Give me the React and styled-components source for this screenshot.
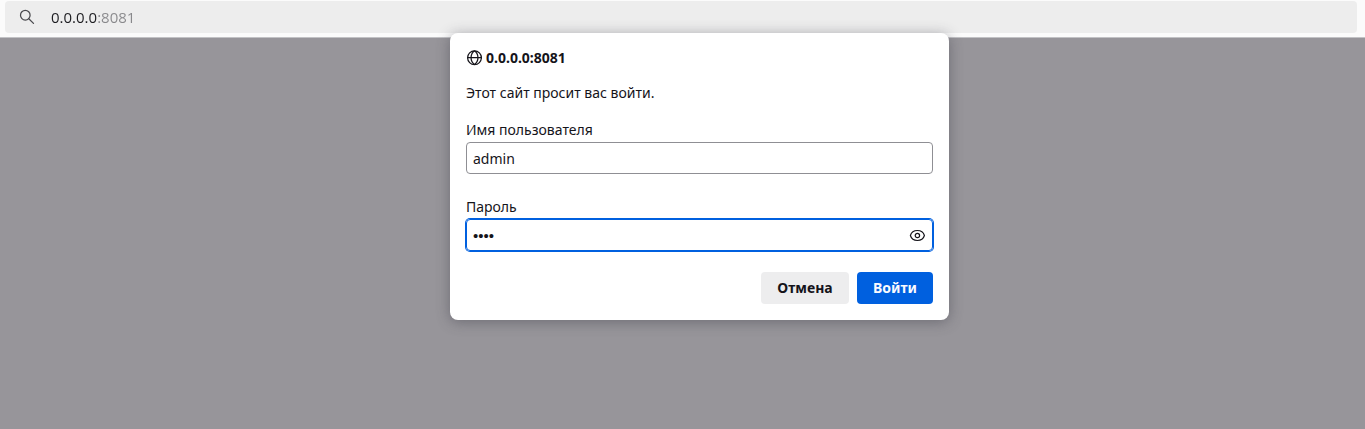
import React, { useState } from "react";
import styled, { createGlobalStyle } from "styled-components";

const GlobalStyle = createGlobalStyle`
  *, *::before, *::after { box-sizing: border-box; }
  body {
    margin: 0;
    color: #15141a;
    font: 14px/20px "Noto Sans", "Open Sans", sans-serif;
  }
  button, input { font: inherit; color: inherit; }
`;

const Browser = styled.div`
  display: flex;
  flex-direction: column;
  min-height: 100vh;
`;

const Toolbar = styled.header`
  padding: 1px 8px 4px 5px;
  background: #fbfbfb;
  border-bottom: 1px solid #c2c2c5;
`;

const AddressBar = styled.label`
  display: flex;
  align-items: center;
  gap: 16px;
  height: 32px;
  padding: 0 14px;
  border-radius: 4px;
  background: #ededed;
  color: #4a4a4e;
`;

const AddressInput = styled.input`
  flex: 1;
  min-width: 0;
  padding: 0;
  border: 0;
  outline: 0;
  color: transparent;
  background: linear-gradient(to right, #1c1c20 46px, #88888b 46px);
  background-clip: text;
  -webkit-background-clip: text;
  font-family: "Open Sans", sans-serif;
  font-size: 15px;
`;

const Content = styled.main`
  flex: 1;
  display: flex;
  justify-content: center;
  align-items: flex-start;
  padding-left: 34px;
  background: #97959a;
`;

const Dialog = styled.form`
  width: 499px;
  max-width: 100%;
  margin-top: -5px;
  padding: 15px 16px 16px;
  border-radius: 8px;
  background: #fff;
  box-shadow: 0 2px 14px rgba(58, 57, 68, 0.45);
`;

const Origin = styled.h1`
  display: flex;
  align-items: center;
  gap: 4px;
  margin: 0 0 15px;
  font-size: 14px;
  line-height: 20px;
`;

const Message = styled.p`
  margin: 0 0 17px;
`;

const Fields = styled.div`
  display: grid;
  gap: 23px;
  margin-bottom: 21px;
`;

const Field = styled.div`
  min-width: 0;
`;

const FieldLabel = styled.label`
  display: block;
  margin-bottom: 2px;
`;

const InputFrame = styled.div`
  display: flex;
  align-items: center;
  height: 32px;
  padding: 0 7px 0 6px;
  border: 1px solid #8f8f94;
  border-radius: 4px;

  &:has(button) {
    border-color: #0060df;
    box-shadow: 0 0 0 1px #0060df;
  }
`;

const TextInput = styled.input`
  flex: 1;
  min-width: 0;
  padding: 2px 0 0;
  border: 0;
  outline: 0;
  background: none;

  &[type="password"] {
    font-family: "Liberation Sans", sans-serif;
    font-size: 15px;
  }
`;

const RevealButton = styled.button`
  display: flex;
  padding: 0;
  border: 0;
  background: none;
`;

const Actions = styled.div`
  display: flex;
  justify-content: flex-end;
  gap: 8px;
`;

const Button = styled.button`
  min-width: ${(p) => (p.$primary ? 76 : 88)}px;
  height: 32px;
  padding: 0 14px;
  border: 0;
  border-radius: 4px;
  background: ${(p) => (p.$primary ? "#0060df" : "#ededee")};
  color: ${(p) => (p.$primary ? "#fbfbfe" : "#15141a")};
  font-weight: 700;
`;

const Icon = styled.svg.attrs({ width: 16, height: 16, viewBox: "0 0 16 16", fill: "none", stroke: "currentColor", "aria-hidden": true })`
  flex: none;
`;

const SearchIcon = () => (
  <Icon strokeWidth="1.25">
    <circle cx="6.3" cy="6.2" r="4.8" />
    <path d="M9.8 9.7l4.7 4.7" strokeLinecap="round" />
  </Icon>
);

const GlobeIcon = () => (
  <Icon strokeWidth="1.25">
    <circle cx="8.5" cy="7.7" r="6.9" />
    <path d="M1.7 7.7h13.6M8.5 .8C3.9 4.4 3.9 11 8.5 14.6M8.5 .8c4.6 3.6 4.6 10.2 0 13.8" />
  </Icon>
);

const EyeIcon = () => (
  <Icon strokeWidth="1.2">
    <path d="M1.4 8.5C2.4 5.1 5.3 3.5 8.4 3.5S14.4 5.1 15.4 8.5c-1 3.4-3.9 5-7 5S2.4 11.9 1.4 8.5z" />
    <circle cx="8.4" cy="8.5" r="2.2" />
  </Icon>
);

export default function App() {
  const [revealed, setRevealed] = useState(false);

  return (
    <Browser>
      <GlobalStyle />
      <Toolbar>
        <AddressBar>
          <SearchIcon />
          <AddressInput type="text" aria-label="URL" defaultValue="0.0.0.0:8081" />
        </AddressBar>
      </Toolbar>
      <Content>
        <Dialog role="dialog" aria-labelledby="origin" onSubmit={(e) => e.preventDefault()}>
          <Origin id="origin">
            <GlobeIcon />
            0.0.0.0:8081
          </Origin>
          <Message>Этот сайт просит вас войти.</Message>
          <Fields>
            <Field>
              <FieldLabel htmlFor="username">Имя пользователя</FieldLabel>
              <InputFrame>
                <TextInput id="username" type="text" defaultValue="admin" />
              </InputFrame>
            </Field>
            <Field>
              <FieldLabel htmlFor="password">Пароль</FieldLabel>
              <InputFrame>
                <TextInput id="password" type={revealed ? "text" : "password"} defaultValue="1234" />
                <RevealButton type="button" aria-label="Показать пароль" onClick={() => setRevealed(!revealed)}>
                  <EyeIcon />
                </RevealButton>
              </InputFrame>
            </Field>
          </Fields>
          <Actions>
            <Button type="button">Отмена</Button>
            <Button type="submit" $primary>Войти</Button>
          </Actions>
        </Dialog>
      </Content>
    </Browser>
  );
}
